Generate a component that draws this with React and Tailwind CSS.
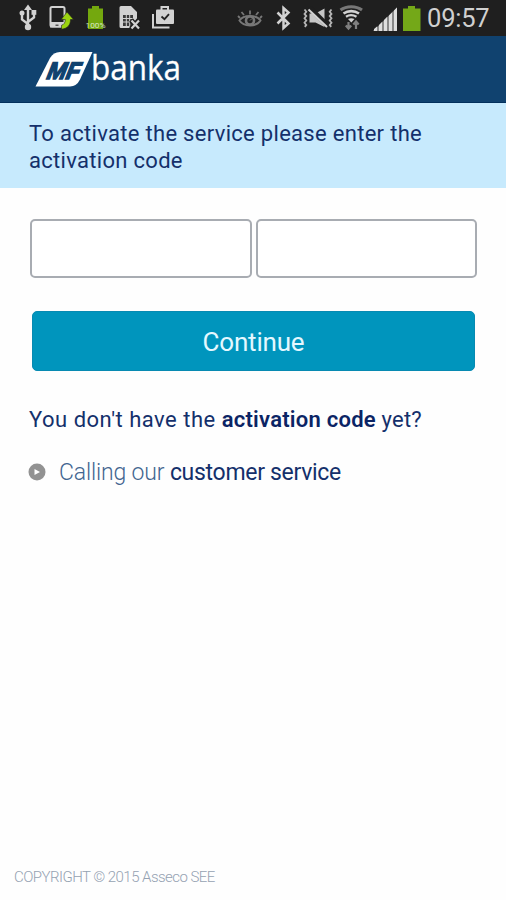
import React, { useState } from 'react';

const UsbIcon = () => (
    <svg className="w-[30px] h-9" viewBox="14 0 30 36" fill="none" stroke="#d2d2d2" strokeWidth="2.400">
        <path d="M28 9v18M28 24l-6-4.500v-5M28 22l6-4.500v-4" />
        <path d="M28 4.500l4 5.500h-8z" fill="#d2d2d2" stroke="none" />
        <circle cx="28" cy="27" r="3.200" fill="#d2d2d2" stroke="none" />
        <circle cx="22" cy="13" r="2.500" fill="#d2d2d2" stroke="none" />
        <path d="M31.500 10h4.800v4.800h-4.800z" fill="#d2d2d2" stroke="none" />
    </svg>
);

const PhoneIcon = () => (
    <svg className="w-[34px] h-9" viewBox="44 0 34 36">
        <rect x="50.500" y="7" width="14" height="19.500" rx="1.500" fill="none" stroke="#d2d2d2" strokeWidth="2" />
        <path d="M50 22h15v5.500H50z" fill="#d2d2d2" />
        <path d="M55.500 24.500h3v1.500h-3z" fill="#555" />
        <path d="M67 12l6.500 7.500h-3c0 5.500-2.800 9-9 9.700v-4c2.700-.7 3.700-2.500 3.700-5.700h-4z" fill="#9bd310" stroke="#222" strokeWidth=".6" />
    </svg>
);

const ChargeIcon = () => (
    <svg className="w-[34px] h-9" viewBox="78 0 34 36">
        <path d="M92 6h7v2.500h4V29H88V8.500h4z" fill="#74a80e" />
        <text x="95.500" y="28" textAnchor="middle" fill="#d8e6c0" fontFamily="Roboto, sans-serif" fontSize="7.500" textLength="20" lengthAdjust="spacingAndGlyphs">100%</text>
    </svg>
);

const SimIcon = () => (
    <svg className="w-[34px] h-9" viewBox="112 0 34 36">
        <path d="M121 6h10l6 6v16h-16a1.500 1.500 0 0 1-1.500-1.500v-19A1.500 1.500 0 0 1 121 6z" fill="#d2d2d2" />
        <path d="M123 15h10v11h-10z" fill="#3a3a3a" />
        <path d="M126.300 15v11M129.700 15v11M123 18.500h10M123 22h10" stroke="#d2d2d2" strokeWidth="1" />
        <path d="M131 20l8 9M139 20l-8 9" stroke="#1f1f1f" strokeWidth="5" />
        <path d="M131.500 20.500l7.500 8M139 20.500l-7.500 8" stroke="#d2d2d2" strokeWidth="2.200" />
    </svg>
);

const BagIcon = () => (
    <svg className="w-[34px] h-9" viewBox="146 0 34 36" fill="none" stroke="#d2d2d2">
        <path d="M153 14v13.500h16.500" strokeWidth="2" />
        <path d="M161.500 10V7h6.500v3" strokeWidth="2" />
        <rect x="156" y="9.500" width="18" height="14.500" rx="1" fill="#d2d2d2" stroke="none" />
        <path d="M161.500 16.500l3 2.700 4.500-5" stroke="#222" strokeWidth="1.800" />
    </svg>
);

const EyeIcon = () => (
    <svg className="w-[34px] h-9" viewBox="234 0 34 36" fill="none" stroke="#777">
        <path d="M239.500 20.500c4-6 17-6 21 0-4 6.500-17 6.500-21 0z" strokeWidth="2" />
        <circle cx="250" cy="20.500" r="4" strokeWidth="2.600" />
        <path d="M250 20.500l2-2" strokeWidth="1" />
        <path d="M250 14.500v-4M244 15l-2.500-3M256 15l2.500-3M240 18l-2-2M260 18l2-2" strokeWidth="1.800" />
    </svg>
);

const BluetoothIcon = () => (
    <svg className="w-[30px] h-9" viewBox="268 0 30 36" fill="none" stroke="#d2d2d2" strokeWidth="2.500">
        <path d="M277.500 12.500l11 11-5 4.500V8l5 4.500-11 11" />
    </svg>
);

const MuteIcon = () => (
    <svg className="w-[39px] h-9" viewBox="298 0 39 36" fill="none">
        <path d="M304.500 9.500l1.800 2.200-1.800 2.200 1.800 2.200-1.800 2.200 1.800 2.200-1.800 2.200 1.800 2.200-1.500 2M331.500 9.500l-1.800 2.200 1.800 2.200-1.800 2.200 1.800 2.200-1.800 2.200 1.800 2.200-1.800 2.200 1.500 2" stroke="#b5b5b5" strokeWidth="1.800" />
        <path d="M309.500 13.500h6l9-5v18.500l-9-4.500h-6z" fill="#c6c6c6" />
        <path d="M309.500 7.500l18 18" stroke="#1f1f1f" strokeWidth="5" />
        <path d="M308.500 9.500l18.500 17.500" stroke="#d2d2d2" strokeWidth="2" />
    </svg>
);

const WifiIcon = () => (
    <svg className="w-[30px] h-9" viewBox="337 0 30 36" fill="none">
        <path d="M340.500 10c6-4.500 15.500-4.500 21.500 0" stroke="#777" strokeWidth="3" />
        <path d="M343.500 13.500c4.500-3.200 11-3.200 15.500 0" stroke="#d2d2d2" strokeWidth="2.600" />
        <path d="M346 16.700c3-2 7-2 10.500 0" stroke="#d2d2d2" strokeWidth="2.300" />
        <path d="M348 19c2-1 4.500-1 6.500 0l-3.200 3.500z" fill="#d2d2d2" />
        <path d="M348.500 22v6M345.800 25.500l2.700 3 2.700-3M356 29v-7M353.300 24.500l2.700-3 2.700 3" stroke="#808080" strokeWidth="2.200" />
    </svg>
);

const SignalIcon = () => (
    <svg className="w-8 h-9" viewBox="367 0 32 36">
        <path d="M373 31L397 7.500V31z" fill="#888" />
        <path d="M374 31v-2l3-2.500V31zM379 31v-6l3-3v9zM384 31V20l3-3v14zM389 31V15.500l3-3V31zM394 31V10.500l3-3V31z" fill="#dedede" />
    </svg>
);

const BatteryIcon = () => (
    <svg className="w-[25px] h-9" viewBox="399 0 25 36">
        <path d="M408 6h7v2.500h5.500V31H403V8.500h5z" fill="#74a818" />
    </svg>
);

const StatusBar = () => (
    <div className="flex justify-between h-9 pl-3.5 pr-4 bg-[#1f1f1f]">
        <div className="flex">
            <UsbIcon />
            <PhoneIcon />
            <ChargeIcon />
            <SimIcon />
            <BagIcon />
        </div>
        <div className="flex">
            <EyeIcon />
            <BluetoothIcon />
            <MuteIcon />
            <WifiIcon />
            <SignalIcon />
            <BatteryIcon />
            <span className="w-[66px] pl-[3px] text-[25.500px] leading-9 tracking-[-0.200px] text-[#d0d0d0] whitespace-nowrap">09:57</span>
        </div>
    </div>
);

const Logo = () => (
    <svg className="w-[160px] h-[60px]" viewBox="34 38 160 60">
        <path d="M35.500 86.500L50 58q3.500-6 10-6h32.500L80 79.500q-3.500 7-10 7z" fill="#fff" />
        <g transform="translate(46 78.500) skewX(-12)">
            <text x="0" y="0" fill="#10426f" stroke="#10426f" strokeWidth="1.500" fontFamily="Liberation Sans, sans-serif" fontWeight="700" fontStyle="italic" fontSize="24" textLength="33" lengthAdjust="spacingAndGlyphs">MF</text>
        </g>
        <text x="91" y="80" fill="#fff" stroke="#fff" strokeWidth=".3" fontFamily="Open Sans, sans-serif" fontSize="35" textLength="90" lengthAdjust="spacingAndGlyphs">banka</text>
    </svg>
);

const App = () => {
    const [code, setCode] = useState(['', '']);

    const updateCode = (index, value) => {
        setCode(code.map((part, i) => (i === index ? value : part)));
    };

    return (
        <div className="flex flex-col min-h-screen bg-[#fefefe] font-['Roboto',sans-serif] text-[#14306b]">
            <StatusBar />
            <header className="h-[67px] pt-0.5 pl-[34px] bg-[#10426f] border-b border-[#03305c]">
                <Logo />
            </header>
            <div className="h-[85px] pt-[17px] pl-[29px] bg-[#c7eafd] text-[22px] leading-[27px] tracking-[0.300px]">
                To activate the service please enter the<br />activation code
            </div>

            <main className="flex-1 pt-[31px]">
                <div className="flex gap-1 pl-[30px]">
                    {code.map((part, i) => (
                        <input
                            key={i}
                            value={part}
                            onChange={(e) => updateCode(i, e.target.value)}
                            className="w-[221.500px] h-[59px] px-3 bg-white border-2 border-[#a8acb2] rounded-[5px]"
                        />
                    ))}
                </div>
                <button className="block w-[443px] h-[60px] mt-[33px] ml-8 pt-0.5 rounded-[5px] bg-[#0095bd] border border-[#078ab2] text-[26px] tracking-[-0.200px] text-[#e4f8ff]">
                    Continue
                </button>
                <p className="mt-[35px] ml-[29px] text-[22px] leading-[28px] tracking-[0.500px] whitespace-nowrap">
                    You don't have the <b className="font-semibold tracking-[0.250px] text-[#0b2465]">activation code</b><span className="tracking-[0.200px]"> yet?</span>
                </p>
                <div className="flex items-center mt-[25px] ml-7">
                    <svg className="w-[18px] h-[18px] -mt-0.5 mr-[13px]" viewBox="0 0 18 18">
                        <circle cx="9" cy="9" r="8.500" fill="#929292" />
                        <path d="M6.500 6l5.500 3-5.500 3z" fill="#fff" />
                    </svg>
                    <p className="text-[23px] leading-[28px] font-light tracking-[-0.150px] whitespace-nowrap text-[#426590]">
                        Calling our <span className="font-normal tracking-[-0.300px] text-[#14306b]">customer service</span>
                    </p>
                </div>
            </main>

            <footer className="pl-3.5 pb-3.5 text-[15px] leading-[18px] font-light tracking-[-0.540px] text-[#95a2b2]">
                COPYRIGHT © 2015 Asseco SEE
            </footer>
        </div>
    );
};

export default App;
